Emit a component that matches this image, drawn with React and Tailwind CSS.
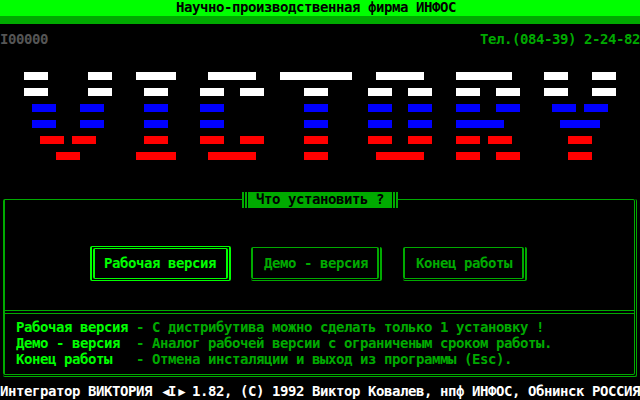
const W = "#ffffff", B = "#0000ff", R = "#ff0000";
const rows = [
  [72, W, [[24,48],[88,112],[136,176],[208,256],[280,352],[376,424],[456,512],[544,568],[592,616]]],
  [88, W, [[24,48],[88,112],[144,168],[200,224],[240,264],[304,328],[368,392],[408,432],[456,480],[496,520],[544,568],[592,616]]],
  [104, B, [[32,56],[80,104],[144,168],[200,224],[304,328],[368,392],[408,432],[456,480],[496,520],[552,576],[584,608]]],
  [120, B, [[32,56],[80,104],[144,168],[200,224],[304,328],[368,392],[408,432],[456,504],[560,600]]],
  [136, R, [[40,64],[72,96],[144,168],[200,224],[240,264],[304,328],[368,392],[408,432],[456,480],[488,512],[568,592]]],
  [152, R, [[56,80],[136,176],[208,256],[304,328],[376,424],[456,480],[496,520],[568,592]]],
];

function Logo() {
  return (
    <svg width="640" height="96" viewBox="0 72 640 96" className="block mt-6" shapeRendering="crispEdges">
      {rows.flatMap(([y, fill, bars]) =>
        bars.map(([a, b]) => <rect key={y + "-" + a} x={a} y={y} width={b - a} height="8" fill={fill} />)
      )}
    </svg>
  );
}

function DimButton({ label, className }) {
  return (
    <div className={"mt-px h-[34px] border-r-2 border-b border-[#00aa00] pr-px pb-px rounded-[2px] " + className}>
      <div className="h-full border-2 border-y border-[#00aa00] rounded-[2px] pl-[11px] pt-[8px] text-[#00aa00]">{label}</div>
    </div>
  );
}

export default function App() {
  return (
    <div
      className="relative w-[640px] h-[400px] overflow-hidden bg-black flex flex-col whitespace-pre font-bold text-[14px] leading-[14px] tracking-[-0.43px]"
      style={{ fontFamily: '"DejaVu Sans Mono", "Liberation Mono", monospace' }}
    >
      <div className="h-4 shrink-0 bg-[#00ff00] pl-44 text-black">Научно-производственная фирма ИНФОС</div>
      <div className="h-2 shrink-0 bg-[#00aa00]" />
      <div className="mt-2 h-4 shrink-0 flex justify-between">
        <span className="text-[#555555]">I00000</span>
        <span className="text-[#00aa00]">Тел.(084-39) 2-24-82</span>
      </div>
      <Logo />
      <div className="relative mt-[31px] ml-[3px] w-[634px] h-[178px] shrink-0 border-r border-b border-[#00aa00] pr-px pb-px rounded-[2px]">
        <div className="h-full border border-l-2 border-[#00aa00] rounded-[2px] flex flex-col">
          <div className="h-[110px] shrink-0 pl-[85px] pt-[46px] flex items-start">
            <div className="w-[141px] h-[35px] border-2 border-y border-[#00ff00] p-px rounded-[2px]">
              <div className="h-full border-2 border-y border-[#00ff00] rounded-[2px] pl-[9px] pt-[7px] text-[#00ff00]">Рабочая версия</div>
            </div>
            <DimButton label="Демо - версия" className="ml-[20px] w-[131px]" />
            <DimButton label="Конец работы" className="ml-[21px] w-[124px]" />
          </div>
          <div className="h-1 shrink-0 border-y border-[#00aa00]" />
          <div className="pl-[11px] pt-[6px] text-[#00aa00]">
            <div className="h-4"><span className="text-[#00ff00]">Рабочая версия </span>- С дистрибутива можно сделать только 1 установку !</div>
            <div className="h-4"><span className="text-[#00ff00]">Демо - версия  </span>- Аналог рабочей версии с ограниченым сроком работы.</div>
            <div className="h-4"><span className="text-[#00ff00]">Конец работы   </span>- Отмена инсталяции и выход из программы (Esc).</div>
          </div>
        </div>
        <div className="absolute left-[239px] top-[-7px] h-4 flex bg-black">
          <div className="w-[2px] bg-[#00aa00]" />
          <div className="w-[2px] ml-px bg-[#00aa00]" />
          <div className="ml-px w-36 bg-[#00aa00] pl-2 text-black">Что установить ?</div>
          <div className="w-[2px] ml-px bg-[#00aa00]" />
          <div className="w-[2px] ml-px bg-[#00aa00]" />
        </div>
      </div>
      <div className="mt-[7px] h-4 shrink-0 text-white">
        Интегратор ВИКТОРИЯ <span className="inline-block w-2 text-[12px] leading-[0] tracking-[-4px]" style={{ fontFamily: '"Liberation Sans", sans-serif' }}>◄</span>I<span className="inline-block w-2 text-[12px] leading-[0] tracking-[-4px]" style={{ fontFamily: '"Liberation Sans", sans-serif' }}>►</span> 1.82, (C) 1992 Виктор Ковалев, нпф ИНФОС, Обнинск РОССИЯ
      </div>
    </div>
  );
}
